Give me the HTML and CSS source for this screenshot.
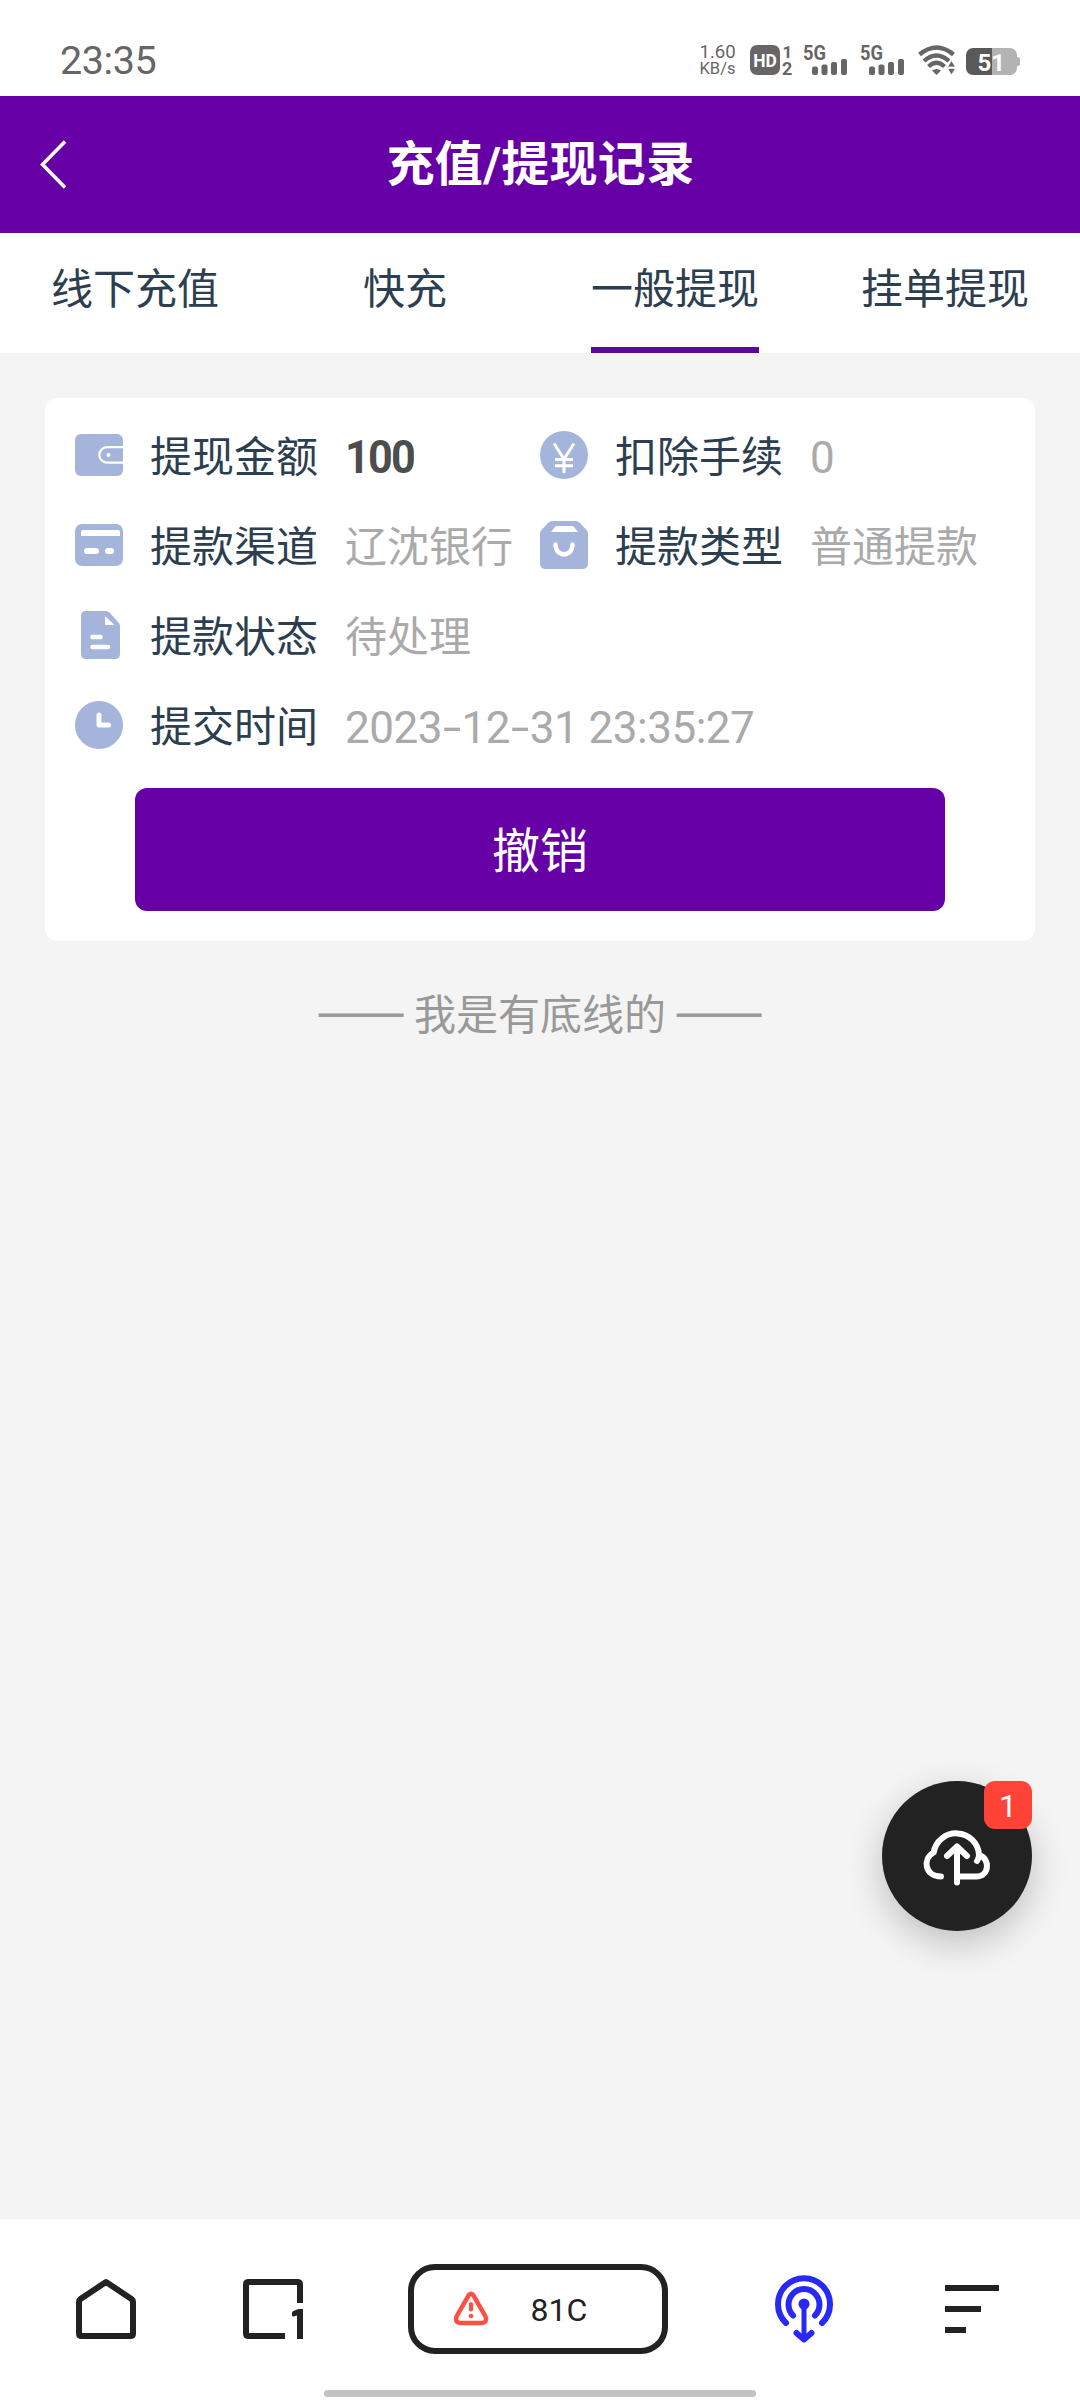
FILE: index.html
```html
<!DOCTYPE html>
<html lang="zh-CN">
<head>
<meta charset="utf-8">
<title>充值/提现记录</title>
<link rel="stylesheet" href="styles.css">
</head>
<body>
<div class="screen">
  <div class="status-bar">
    <span class="clock">23:35</span>
    <div class="status-icons">
      <div class="speed"><span>1.60</span><span>KB/s</span></div>
      <svg class="hd" width="44" height="32" viewBox="0 0 44 32">
        <rect x="0" y="1" width="30" height="30" rx="7" fill="#666"/>
        <text x="3.2" y="22.6" class="t-bold" font-size="18.5" fill="#fff" textLength="23.6" lengthAdjust="spacingAndGlyphs">HD</text>
        <text x="32.500" y="13.500" class="t-bold" font-size="17">1</text>
        <text x="32" y="31" class="t-bold" font-size="18">2</text>
      </svg>
      <svg class="signal" width="45" height="32" viewBox="0 0 45 32">
        <text x="0" y="16" class="t-bold" font-size="21" textLength="23" lengthAdjust="spacingAndGlyphs">5G</text>
        <g fill="#666"><rect x="9" y="22.5" width="6" height="8.5" rx="2"/><rect x="18.500" y="20.500" width="6" height="10.500" rx="2"/><rect x="28" y="18" width="6" height="13" rx="2"/><rect x="38" y="15" width="6" height="16" rx="2"/></g>
      </svg>
      <svg class="signal last" width="45" height="32" viewBox="0 0 45 32">
        <text x="0" y="16" class="t-bold" font-size="21" textLength="23" lengthAdjust="spacingAndGlyphs">5G</text>
        <g fill="#666"><rect x="9" y="22.500" width="6" height="8.500" rx="2"/><rect x="18.500" y="20.500" width="6" height="10.500" rx="2"/><rect x="28" y="18" width="6" height="13" rx="2"/><rect x="38" y="15" width="6" height="16" rx="2"/></g>
      </svg>
      <svg class="wifi" width="38" height="32" viewBox="0 0 38 32">
        <g fill="none" stroke="#666" stroke-width="4.300">
          <path d="M1.500 10.500Q18.500-3.500 35.500 10.500"/><path d="M6 17Q18.500 6 31 17"/><path d="M10.500 22.500Q18.500 15 26.500 22.500"/>
        </g>
        <path d="M14 26.500Q18.500 23.500 23 26.500L18.500 31z" fill="#666"/>
        <path d="M33.500 16.500l4 6.500h-8zM33.500 31l4-6.500h-8z" fill="#666" stroke="#fff" stroke-width=".8"/>
      </svg>
      <svg class="battery" width="54" height="32" viewBox="0 0 54 32">
        <path d="M26 4h18a7 7 0 0 1 7 7v2q3 0 3 2v5q0 2-3 2v2a7 7 0 0 1-7 7H26z" fill="#b3b3b3"/>
        <path d="M7 4h19v27H7a7 7 0 0 1-7-7V11a7 7 0 0 1 7-7z" fill="#595959"/>
        <text x="11.500" y="26.600" class="t-bold" font-size="24" fill="#fff">51</text>
      </svg>
    </div>
  </div>

  <header class="header">
    <svg class="back" width="30" height="50" viewBox="0 0 30 50"><path d="M25 1.500L2.500 24.500L25 47.500" fill="none" stroke="#fff" stroke-width="3.500"/></svg>
    <h1 class="title">充值/提现记录</h1>
  </header>

  <nav class="tabs">
    <div class="tab"><span>线下充值</span></div>
    <div class="tab"><span>快充</span></div>
    <div class="tab active"><span>一般提现</span></div>
    <div class="tab"><span>挂单提现</span></div>
  </nav>

  <main class="content">
    <section class="card">
      <div class="fields">
        <div class="field">
          <svg class="icon" viewBox="0 0 48 48"><rect y="3" width="48" height="42" rx="6" fill="#a5b4da"/><path d="M48 16.200H32a7.700 7.700 0 0 0 0 15.400H48" fill="none" stroke="#fff" stroke-width="2.200"/><circle cx="33.500" cy="24" r="2" fill="#fff"/></svg>
          <span class="label">提现金额</span><span class="value amount">100</span>
        </div>
        <div class="field">
          <svg class="icon" viewBox="0 0 48 48"><circle cx="24" cy="24" r="24" fill="#a5b4da"/><path d="M14 12.500L24 28L34 12.500M24 28V42M15 28.500H33M15 34.800H33" fill="none" stroke="#fff" stroke-width="3"/></svg>
          <span class="label">扣除手续</span><span class="value fee">0</span>
        </div>
        <div class="field">
          <svg class="icon" viewBox="0 0 48 48"><rect y="3" width="48" height="42" rx="7" fill="#a5b4da"/><path d="M6 15v-4q0-2 2-2H43q2 0 2 2v4z" fill="#fff"/><rect x="9" y="27" width="15" height="6" rx="3" fill="#fff"/><rect x="30" y="27" width="9" height="6" rx="3" fill="#fff"/></svg>
          <span class="label">提款渠道</span><span class="value">辽沈银行</span>
        </div>
        <div class="field">
          <svg class="icon" viewBox="0 0 48 48"><path d="M13 0H35Q38 0 40 2L46.500 9Q48 10.500 48 13V42q0 6-6 6H6q-6 0-6-6V13Q0 10.500 1.500 9L8 2Q10 0 13 0z" fill="#a5b4da"/><path d="M11 11l4-5q.8-1 2-1H32q1.200 0 2 1l4 5z" fill="#fff"/><path d="M15.500 23.500c0 13 17 13 17 0" fill="none" stroke="#fff" stroke-width="4.500" stroke-linecap="round"/></svg>
          <span class="label">提款类型</span><span class="value">普通提款</span>
        </div>
        <div class="field wide">
          <svg class="icon" viewBox="0 0 48 48"><path d="M11 0H31Q33 0 34.500 1.500L43 11Q45 13 45 15V43q0 5-5 5H11q-5 0-5-5V5q0-5 5-5z" fill="#a5b4da"/><path d="M30.500 6V13.500h8z" fill="#fff" stroke="#fff" stroke-linejoin="round"/><path d="M17.500 26h8M17.500 36H33" stroke="#fff" stroke-width="4.500" stroke-linecap="round"/></svg>
          <span class="label">提款状态</span><span class="value">待处理</span>
        </div>
        <div class="field wide">
          <svg class="icon" viewBox="0 0 48 48"><circle cx="24" cy="24" r="24" fill="#a5b4da"/><path d="M24 14V24H33.500" fill="none" stroke="#fff" stroke-width="5" stroke-linecap="round" stroke-linejoin="round"/></svg>
          <span class="label">提交时间</span><span class="value time">2023<i>-</i>12<i>-</i>31 23:35:27</span>
        </div>
      </div>
      <button class="cancel" type="button">撤销</button>
    </section>
    <p class="end"><span class="dash">——</span> 我是有底线的 <span class="dash">——</span></p>
  </main>

  <footer class="toolbar">
    <svg width="60" height="60" viewBox="0 0 60 60"><path d="M30 3L55.500 20Q57 21 57 23V54.500Q57 57 54.500 57H5.500Q3 57 3 54.500V23Q3 21 4.500 20z" fill="none" stroke="#222" stroke-width="6" stroke-linejoin="round"/></svg>
    <svg class="windows" width="60" height="60" viewBox="0 0 60 60"><path d="M58 24V5.500Q58 3 55.500 3H6.500Q4 3 4 5.500V54.500Q4 57 6.500 57H43" fill="none" stroke="#222" stroke-width="6"/><path d="M50 34Q50 32.500 51.500 32L55 30.500Q56 30 57 30H61V60H55V36.500L51.500 37.500Q50 37.800 50 36.500z" fill="#222"/></svg>
    <div class="address">
      <svg width="36" height="36" viewBox="0 0 36 36"><path d="M15.300 4.800Q18 .5 20.700 4.800L32.500 25.500Q34.500 31.500 29 32H7Q1.500 31.500 3.500 25.500z" fill="none" stroke="#ff4f44" stroke-width="4.500" stroke-linejoin="round"/><path d="M18 13v5.500" stroke="#ff4f44" stroke-width="4.200" stroke-linecap="round"/><circle cx="18" cy="25" r="2.300" fill="#ff4f44"/></svg>
      <span>81C</span>
    </div>
    <svg class="cast" width="60" height="70" viewBox="0 0 60 70"><g fill="none" stroke="#2929f5" stroke-width="6" stroke-linecap="round" stroke-linejoin="round"><path d="M12 49A26 26 0 1 1 48 49"/><path d="M19 41.500A15.500 15.500 0 1 1 41 41.500"/><path d="M30 30V64" stroke-width="5"/><path d="M22.500 59L30 65.500L37.500 59"/></g><circle cx="30" cy="30" r="5.500" fill="#2929f5"/></svg>
    <svg width="60" height="60" viewBox="0 0 60 60"><path d="M5 9H59M5 30H41M5 51H26" stroke="#222" stroke-width="6"/></svg>
  </footer>
  <div class="gesture"></div>

  <div class="upload">
    <svg width="70" height="60" viewBox="0 0 70 60"><g fill="none" stroke="#fff" stroke-width="6" stroke-linecap="round" stroke-linejoin="round"><path d="M19 50.500C3 50.500 0 33 11.700 26.500A22.800 22.500 0 0 1 57 28.500Q57 32.500 55 35"/><path d="M57.500 29.500C68 32 68 50.500 54 50.500H36"/><path d="M35 56.500V21M25 30L35 20.500L45 30"/></g></svg>
    <span class="badge">1</span>
  </div>
</div>
</body>
</html>
```

FILE: styles.css
```css
* { box-sizing: border-box; }

body {
  margin: 0;
  background: #f4f4f4;
  font-family: Roboto, "Noto Sans CJK SC", sans-serif;
}

svg { display: block; flex: none; overflow: visible; }

.screen {
  position: relative;
  display: flex;
  flex-direction: column;
  width: 1080px;
  height: 2400px;
  overflow: hidden;
}

.status-bar {
  display: flex;
  justify-content: space-between;
  align-items: flex-start;
  height: 96px;
  padding: 37px 60px 0 60px;
  background: #fff;
  color: #666;
}

.clock { padding-top: 1px; font-size: 39.5px; line-height: 46px; letter-spacing: -0.4px; }

.status-icons { display: flex; margin-top: 7px; }

.speed {
  display: flex;
  flex-direction: column;
  width: 36px;
  margin-right: 14px;
  font-size: 18.5px;
  line-height: 16px;
}

.speed span + span { padding-top: 1px; font-size: 16.5px; }
.hd { margin-right: 9px; }
.signal { margin-right: 12px; }
.signal.last { margin-right: 13.5px; }
.wifi { margin-right: 10px; }
.t-bold { font-weight: 700; }
.t-bold:not([fill]) { fill: #666; }

.header {
  display: grid;
  grid-template-columns: 110px 1fr 110px;
  align-items: center;
  height: 137px;
  background: #6600a6;
  color: #fff;
}

.back { margin-left: 40px; }

.title {
  margin: 0;
  padding-left: 1px;
  font-size: 48px;
  font-weight: 700;
  line-height: 72px;
  letter-spacing: 0.3px;
  text-align: center;
}

.tabs {
  display: grid;
  grid-template-columns: repeat(4, 1fr);
  height: 120px;
  background: #fff;
  color: #2c3e50;
  font-size: 42px;
}

.tab { display: flex; justify-content: center; }
.tab span { height: 120px; line-height: 113px; }
.active span { border-bottom: 6px solid #5c0a9b; }

.content { flex: 1; padding: 45px; }

.card {
  height: 543px;
  padding: 12px 30px 30px;
  border-radius: 12px;
  background: #fff;
}

.fields { display: grid; grid-template-columns: repeat(2, 465px); grid-auto-rows: 90px; }
.field { display: flex; align-items: center; gap: 27px; font-size: 42px; line-height: 60px; white-space: nowrap; }
.wide { grid-column: 1 / 3; }
.icon { width: 48px; height: 48px; }
.label, .value { padding-top: 5px; }
.label { color: #2c3e50; }
.value { color: #aaa; }

.value.amount {
  padding-top: 3px;
  color: #4d4d4d;
  font-size: 47px;
  font-weight: 700;
  letter-spacing: -2px;
  transform: scaleX(0.92);
  transform-origin: left;
}

.fee { font-size: 44px; }
.time { font-size: 44px; letter-spacing: -0.5px; }
.time i { display: inline-block; margin: 0 4px; font-style: normal; transform: scaleX(1.5); }

.cancel {
  display: block;
  width: 810px;
  height: 123px;
  margin: 18px auto 0;
  padding: 0 0 5px;
  border: 0;
  border-radius: 12px;
  background: #6600a6;
  color: #fff;
  font: 48px "Noto Sans CJK SC", sans-serif;
}

.end {
  margin: 40px 0 0;
  color: #999;
  font-family: "Noto Sans CJK SC", sans-serif;
  font-size: 42px;
  line-height: 62px;
  text-align: center;
}

.dash {
  display: inline-block;
  margin: 0 8.5px;
  transform: translateY(-3px) scaleX(1.26);
  -webkit-text-stroke: 0.8px #999;
}

.toolbar {
  display: grid;
  grid-template-columns: 60px 60px 260px 60px 60px;
  column-gap: 106px;
  align-items: center;
  height: 171px;
  padding: 9px 0 0 76px;
  background: #fff;
}

.address {
  display: flex;
  align-items: center;
  height: 90px;
  padding-left: 38.5px;
  border: 6px solid #222;
  border-radius: 27px;
  color: #222;
  font-size: 32px;
}

.address span { margin-left: 42px; padding-top: 2px; }

.gesture { height: 10px; background: #fff; }

.gesture::before {
  content: "";
  display: block;
  width: 432px;
  height: 7px;
  margin: 0 auto;
  border-radius: 4px;
  background: #c2c2c2;
}

.upload {
  position: absolute;
  left: 882px;
  top: 1781px;
  display: flex;
  align-items: center;
  justify-content: center;
  width: 150px;
  height: 150px;
  border-radius: 50%;
  background: #222;
  box-shadow: 0 12px 36px rgba(0, 0, 0, 0.22);
}

.badge {
  position: absolute;
  top: 0;
  right: 0;
  width: 48px;
  height: 48px;
  border-radius: 11px;
  background: #ff4437;
  color: #fff;
  font-size: 32px;
  line-height: 50px;
  text-align: center;
}
```
